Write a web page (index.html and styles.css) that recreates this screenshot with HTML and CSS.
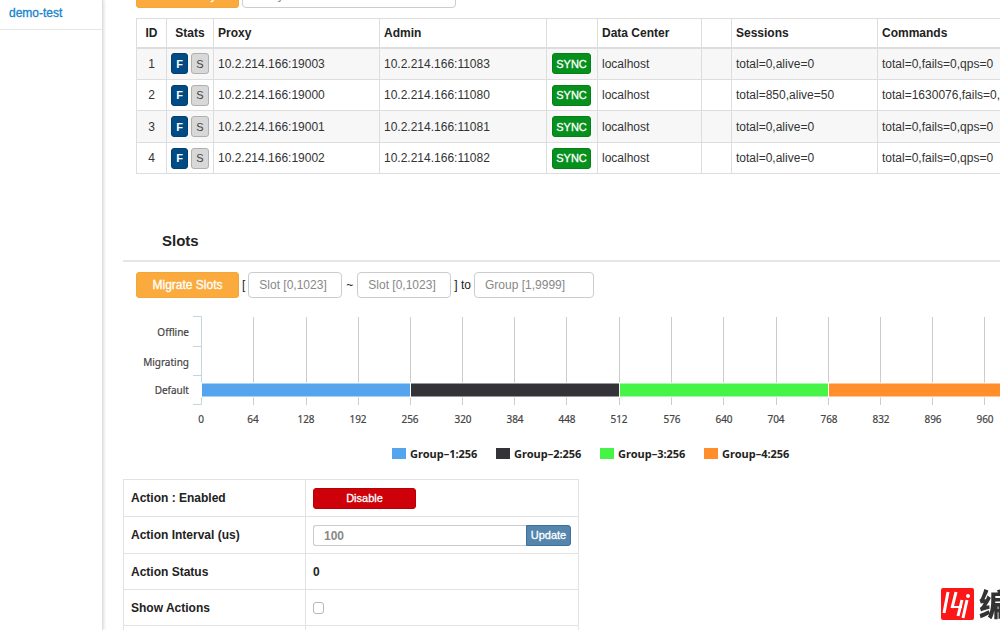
FILE: index.html
```html
<!DOCTYPE html>
<html lang="en">
<head>
<meta charset="utf-8">
<title>Proxies and slots</title>
<link rel="stylesheet" href="styles.css">
</head>
<body>
<div class="layout">
  <nav class="sidebar"><a class="sidebar-link" href="#">demo-test</a></nav>
  <main class="main">
    <section class="proxies">
      <div class="toolbar">
        <button class="btn btn-warning" type="button">New Proxy</button>
        <input class="field field-address" type="text" placeholder="Proxy Address" aria-label="Proxy Address">
      </div>
      <table class="proxy-table">
        <colgroup><col class="c-id"><col class="c-stats"><col class="c-proxy"><col class="c-admin"><col class="c-sync"><col class="c-dc"><col class="c-gap"><col class="c-sessions"><col class="c-commands"></colgroup>
        <thead><tr><th class="center">ID</th><th class="center">Stats</th><th>Proxy</th><th>Admin</th><th></th><th>Data Center</th><th></th><th>Sessions</th><th>Commands</th></tr></thead>
        <tbody>
          <tr><td class="center">1</td><td><div class="stats"><button class="tag tag-f" type="button">F</button><button class="tag tag-s" type="button">S</button></div></td><td>10.2.214.166:19003</td><td>10.2.214.166:11083</td><td><button class="tag tag-sync" type="button">SYNC</button></td><td>localhost</td><td></td><td>total=0,alive=0</td><td>total=0,fails=0,qps=0</td></tr>
          <tr><td class="center">2</td><td><div class="stats"><button class="tag tag-f" type="button">F</button><button class="tag tag-s" type="button">S</button></div></td><td>10.2.214.166:19000</td><td>10.2.214.166:11080</td><td><button class="tag tag-sync" type="button">SYNC</button></td><td>localhost</td><td></td><td>total=850,alive=50</td><td>total=1630076,fails=0,qps=0</td></tr>
          <tr><td class="center">3</td><td><div class="stats"><button class="tag tag-f" type="button">F</button><button class="tag tag-s" type="button">S</button></div></td><td>10.2.214.166:19001</td><td>10.2.214.166:11081</td><td><button class="tag tag-sync" type="button">SYNC</button></td><td>localhost</td><td></td><td>total=0,alive=0</td><td>total=0,fails=0,qps=0</td></tr>
          <tr><td class="center">4</td><td><div class="stats"><button class="tag tag-f" type="button">F</button><button class="tag tag-s" type="button">S</button></div></td><td>10.2.214.166:19002</td><td>10.2.214.166:11082</td><td><button class="tag tag-sync" type="button">SYNC</button></td><td>localhost</td><td></td><td>total=0,alive=0</td><td>total=0,fails=0,qps=0</td></tr>
        </tbody>
      </table>
    </section>

    <h2 class="section-title">Slots</h2>
    <section class="slots">
      <div class="toolbar">
        <button class="btn btn-warning" type="button">Migrate Slots</button>
        <span>[</span>
        <input class="field field-slot" type="text" placeholder="Slot [0,1023]" aria-label="First slot">
        <span class="tilde">~</span>
        <input class="field field-slot" type="text" placeholder="Slot [0,1023]" aria-label="Last slot">
        <span>] to</span>
        <input class="field field-group" type="text" placeholder="Group [1,9999]" aria-label="Group">
      </div>
      <svg class="chart" width="920" height="164" viewBox="136 308 920 164" role="img" aria-label="Slots by group">
        <path class="grid" d="M253.5 317V405M306.5 317V405M358.5 317V405M410.5 317V405M462.5 317V405M514.5 317V405M566.5 317V405M619.5 317V405M671.5 317V405M723.5 317V405M776.5 317V405M828.5 317V405M880.5 317V405M932.5 317V405M984.5 317V405M1037.5 317V405"/>
        <path class="axis" d="M193 316.5H201.5V404.5H193M193 346.5H201M193 375.5H201"/>
        <g class="bars">
          <rect x="201.5" y="383" width="209" height="14" fill="#54a4ee"/>
          <rect x="410.5" y="383" width="209" height="14" fill="#333338"/>
          <rect x="619.5" y="383" width="209" height="14" fill="#46f448"/>
          <rect x="828.5" y="383" width="209" height="14" fill="#ff8e2b"/>
        </g>
        <g class="label label-y"><text x="189" y="336">Offline</text><text x="189" y="366">Migrating</text><text x="189" y="394">Default</text></g>
        <g class="label label-x"><text x="201" y="423">0</text><text x="253" y="423">64</text><text x="306" y="423">128</text><text x="358" y="423">192</text><text x="410" y="423">256</text><text x="463" y="423">320</text><text x="515" y="423">384</text><text x="567" y="423">448</text><text x="619" y="423">512</text><text x="672" y="423">576</text><text x="724" y="423">640</text><text x="776" y="423">704</text><text x="829" y="423">768</text><text x="881" y="423">832</text><text x="933" y="423">896</text><text x="985" y="423">960</text></g>
        <g class="legend">
          <rect x="392" y="448" width="14" height="11" fill="#54a4ee"/><text x="410" y="458">Group–1:256</text>
          <rect x="496" y="448" width="14" height="11" fill="#333338"/><text x="514" y="458">Group–2:256</text>
          <rect x="600" y="448" width="14" height="11" fill="#46f448"/><text x="618" y="458">Group–3:256</text>
          <rect x="704" y="448" width="14" height="11" fill="#ff8e2b"/><text x="722" y="458">Group–4:256</text>
        </g>
      </svg>
    </section>

    <table class="action-table">
      <tbody>
        <tr><th scope="row">Action : Enabled</th><td><button class="btn-disable" type="button">Disable</button></td></tr>
        <tr><th scope="row"><label for="interval">Action Interval (us)</label></th><td><div class="input-group"><input class="interval" id="interval" type="text" placeholder="100"><button class="btn-update" type="button">Update</button></div></td></tr>
        <tr><th scope="row">Action Status</th><td>0</td></tr>
        <tr><th scope="row"><label for="show">Show Actions</label></th><td><input class="check" id="show" type="checkbox"></td></tr>
        <tr><th></th><td></td></tr>
      </tbody>
    </table>
  </main>
</div>
<div class="brand">
  <svg width="34" height="33" viewBox="0 0 34 33" aria-hidden="true">
    <rect x="1" width="33" height="32" rx="2" fill="#fb1718"/>
    <g fill="none" stroke="#fff" stroke-width="3">
      <path d="M8 4L4 25M16 4L12 20"/>
      <path stroke-width="2" d="M11 19H22"/>
      <path d="M22 12L18 28M27 12L23 30"/>
    </g>
    <circle cx="28" cy="8" r="2" fill="#fff"/>
  </svg>
  <span class="brand-name">编程网</span>
</div>
</body>
</html>
```

FILE: styles.css
```css
* { box-sizing: border-box; }
body { margin: 0; height: 100vh; overflow: hidden; background: #fff; color: #333; font: 12px/18px "Liberation Sans", Arial, sans-serif; }
button, input { font: inherit; margin: 0; }
.layout { display: flex; height: 100%; }
.sidebar { flex: 0 0 103px; border-right: 1px solid #ddd; box-shadow: 1px 0 3px #ddd; }
.sidebar-link { display: block; padding: 4px 9px 7px; border-bottom: 1px solid #e7e7e7; color: #1482cc; text-decoration: none; -webkit-text-stroke: 0.3px; }
.main { flex: 1; min-width: 0; padding-left: 20px; overflow: hidden; }
.proxies { margin: -19px 0 0 13px; }
.slots { margin-left: 13px; }
.toolbar { display: flex; align-items: center; gap: 3px; height: 27px; color: #222; }
.btn { height: 26px; padding: 0; border: 1px solid #f3a63a; border-radius: 3px; background: #fbab3e; color: #fff; -webkit-text-stroke: 0.3px; }
.btn-warning { width: 103px; }
.field { height: 26px; padding: 0 10px; border: 1px solid #ccc; border-radius: 4px; background: #fff; color: #555; outline: 0; }
.field::placeholder, .interval::placeholder { color: #888; opacity: 1; }
.field-address { width: 214px; }
.field-slot { width: 94px; }
.field-group { width: 120px; }
.tilde { width: 9px; text-align: center; }

table { border-collapse: collapse; table-layout: fixed; }
th, td { border: 1px solid #ddd; text-align: left; white-space: nowrap; }
.proxy-table { width: 961px; margin-top: 10px; }
.proxy-table th, .proxy-table td { padding: 0 4px; }
.proxy-table thead th { height: 29px; border-bottom-width: 2px; color: #222; }
.proxy-table tbody tr { height: 31px; }
.proxy-table tbody tr:nth-child(odd) { height: 32px; background: #f7f7f7; }
.proxy-table .center { text-align: center; }
.c-id { width: 30px; }
.c-stats { width: 47px; }
.c-proxy { width: 166px; }
.c-admin { width: 167px; }
.c-sync { width: 51px; }
.c-dc { width: 104px; }
.c-gap { width: 30px; }
.c-sessions { width: 146px; }
.c-commands { width: 220px; }
.stats { display: flex; gap: 3px; }
.tag { display: block; height: 21px; padding: 0; border: 1px solid; border-radius: 3px; font-size: 11px; line-height: 18px; color: #fff; }
.tag-f { width: 17px; background: #004b83; border-color: #003f70; font-weight: bold; }
.tag-s { width: 18px; background: #d8d8d8; border-color: #b0b0b0; color: #444; }
.tag-sync { width: 39px; margin-left: 1px; background: #06901d; border-color: #078019; -webkit-text-stroke: 0.3px; }

.section-title { margin: 54px 0 9px; padding: 0 39px 6px; border-bottom: 2px solid #e6e6e6; color: #222; font-size: 15px; line-height: 26px; }
.chart { display: block; margin-top: 10px; font-family: "Noto Sans", "Open Sans", sans-serif; }
.grid { stroke: #ccc; fill: none; }
.axis { stroke: #c3d6dd; fill: none; }
.bars { stroke: #fff; stroke-width: 1; }
.label { font-size: 10px; fill: #444; stroke: #444; stroke-width: 0.2px; }
.label-y { text-anchor: end; }
.label-x { text-anchor: middle; }
.legend { font-size: 11px; font-weight: bold; fill: #222; }

.action-table { width: 456px; margin-top: 7px; color: #222; font-weight: bold; }
.action-table th { width: 182px; }
.action-table th, .action-table td { height: 36px; padding: 0 7px; border-color: #e2e2e2; }
.action-table tr:nth-child(-n+2) > * { height: 37px; }
.btn-disable { display: block; width: 103px; height: 21px; padding: 0; border: 1px solid #b80008; border-radius: 3px; background: #ce0009; color: #fff; font-size: 11px; font-weight: normal; -webkit-text-stroke: 0.3px; }
.input-group { display: flex; height: 21px; }
.interval { flex: 1; min-width: 0; padding: 2px 10px 0; border: 1px solid #ccc; border-right: 0; border-radius: 3px 0 0 3px; }
.btn-update { width: 45px; padding: 0; border: 1px solid #39719c; border-radius: 0 3px 3px 0; background: #5485ad; color: #fff; font-size: 11px; font-weight: normal; -webkit-text-stroke: 0.3px; }
.check { display: block; appearance: none; width: 11px; height: 12px; border: 1px solid #b8b8b8; border-radius: 3px; background: #fff; }
.check:checked { background: #5485ad; }

.brand { position: fixed; right: 0; bottom: 8px; display: flex; width: 60px; height: 34px; gap: 5px; overflow: hidden; white-space: nowrap; }
.brand svg { flex: none; }
.brand-name { color: #333; font: 900 31px/29px "Noto Sans CJK SC", sans-serif; }
```
